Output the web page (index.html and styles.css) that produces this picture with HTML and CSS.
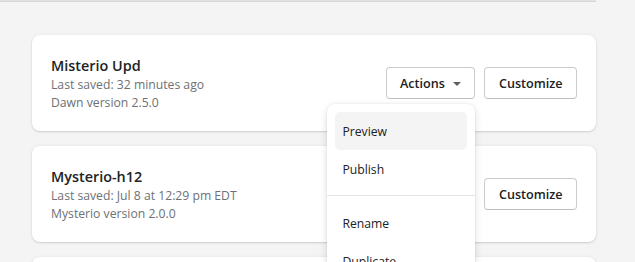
FILE: index.html
```html
<!DOCTYPE html>
<html lang="en">
<head>
<meta charset="utf-8">
<title>Themes</title>
<link rel="stylesheet" href="styles.css">
</head>
<body>
<div class="page">
  <div class="top-rule"></div>
  <div class="list">
    <div class="card">
      <div class="info">
        <div class="title">Misterio Upd</div>
        <div class="meta">Last saved: 32 minutes ago</div>
        <div class="meta">Dawn version 2.5.0</div>
      </div>
      <div class="actions">
        <div class="menu-wrap">
          <button class="btn">Actions <span class="caret"></span></button>
          <div class="popover">
            <div class="section first">
              <div class="item active">Preview</div>
              <div class="item">Publish</div>
            </div>
            <div class="section divided">
              <div class="item">Rename</div>
              <div class="item">Duplicate</div>
              <div class="item">Download theme file</div>
            </div>
          </div>
        </div>
        <button class="btn">Customize</button>
      </div>
    </div>
    <div class="card">
      <div class="info">
        <div class="title">Mysterio-h12</div>
        <div class="meta">Last saved: Jul 8 at 12:29 pm EDT</div>
        <div class="meta">Mysterio version 2.0.0</div>
      </div>
      <div class="actions">
        <button class="btn">Actions <span class="caret"></span></button>
        <button class="btn">Customize</button>
      </div>
    </div>
    <div class="card">
      <div class="info">
        <div class="title">Dawn</div>
        <div class="meta">Last saved: Jul 1 at 9:02 am EDT</div>
        <div class="meta">Dawn version 2.0.0</div>
      </div>
    </div>
  </div>
</div>
</body>
</html>
```

FILE: styles.css
```css
* { box-sizing: border-box; }
html, body {
  margin: 0;
  padding: 0;
  background: #f4f4f4;
  height: 262px;
  overflow: hidden;
}
body {
  font-family: "Open Sans", "Noto Sans", sans-serif;
  color: #202223;
}
.page {
  width: 596px;
}
.top-rule {
  height: 2px;
  border-top: 1px solid #e3e3e3;
  border-bottom: 1px solid #d6d6d6;
}
.list {
  padding: 33px 0 0 32px;
  display: flex;
  flex-direction: column;
  gap: 15px;
}
.card {
  height: 96px;
  background: #fff;
  border-radius: 8px;
  box-shadow: 0 0 4px rgba(23, 24, 24, 0.06), 0 1px 2px rgba(0, 0, 0, 0.13);
  display: flex;
  align-items: center;
  justify-content: space-between;
  padding: 0 19px 0 19px;
}
.title {
  font-size: 14.4px;
  font-weight: 600;
  line-height: 21px;
  color: #202223;
}
.meta {
  font-size: 12.2px;
  line-height: 18px;
  color: #6d7175;
}
.actions {
  display: flex;
  gap: 9px;
  align-items: center;
}
.menu-wrap {
  position: relative;
}
.btn {
  height: 32px;
  padding: 0 13.5px;
  background: #fff;
  border: 1px solid #c9cccf;
  border-bottom-color: #babfc3;
  border-radius: 4px;
  font-family: inherit;
  font-size: 12.6px;
  font-weight: 600;
  color: #202223;
  display: flex;
  align-items: center;
  gap: 8px;
}
.caret {
  width: 0;
  height: 0;
  border-left: 4px solid transparent;
  border-right: 4px solid transparent;
  border-top: 4px solid #5c5f62;
  margin-top: 1px;
}
.popover {
  position: absolute;
  top: calc(100% + 5px);
  right: 0;
  width: 148px;
  background: #fff;
  border-radius: 8px;
  box-shadow: 0 0 3px rgba(0, 0, 0, 0.08), 0 3px 8px rgba(0, 0, 0, 0.12);
  z-index: 10;
}
.section {
  padding: 8px;
}
.section.first {
  padding-bottom: 7px;
}
.section.divided {
  border-top: 1px solid #e1e3e5;
}
.item {
  height: 38px;
  display: flex;
  align-items: center;
  padding: 0 7px;
  border-radius: 5px;
  font-size: 12.2px;
  color: #202223;
}
.item.active {
  background: #f4f4f4;
}
```
